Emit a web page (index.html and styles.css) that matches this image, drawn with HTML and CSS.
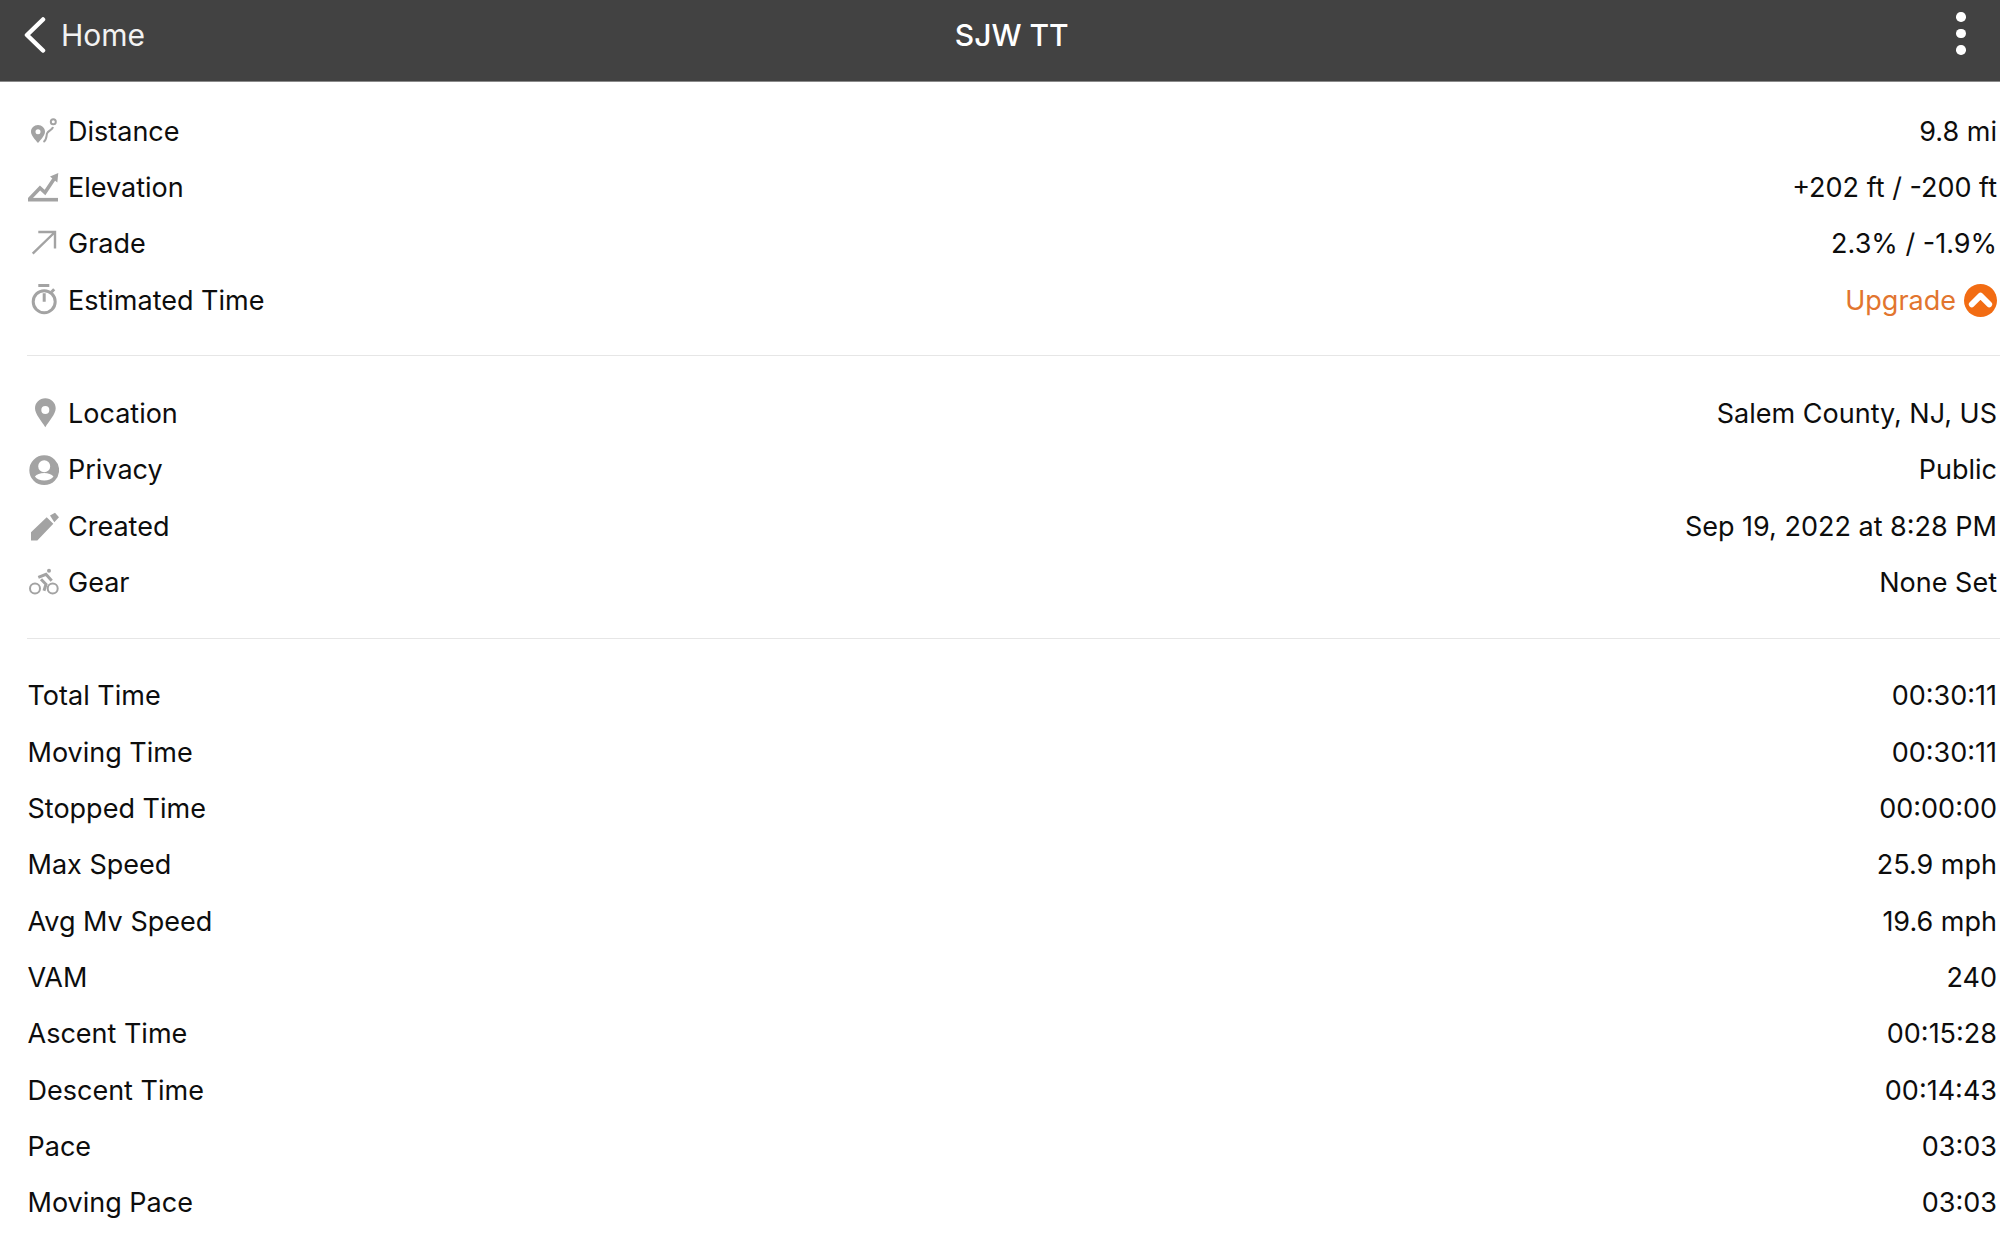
FILE: index.html
```html
<!DOCTYPE html>
<html lang="en">
<head>
<meta charset="utf-8">
<title>SJW TT</title>
<link rel="stylesheet" href="styles.css">
</head>
<body>
<header class="topbar">
  <div class="back">
    <svg class="back-icon" viewBox="0 0 22 36"><path d="M19 2.500 3 18l16 15.500" /></svg>
    <span>Home</span>
  </div>
  <div class="title">SJW TT</div>
  <div class="more"><i></i><i></i><i></i></div>
</header>
<main class="content">
  <section class="group">
    <div class="row">
      <div class="label">
        <svg class="icon" viewBox="0 0 32 32"><path class="fill" fill-rule="evenodd" d="M11 10C7.100 10 4 13 4 16.700 4 20.500 8.200 24.400 11 28c2.800-3.600 7-7.500 7-11.300C18 13 14.900 10 11 10Zm0 4.200a2.500 2.500 0 1 1 0 5 2.500 2.500 0 0 1 0-5Z"/><circle class="line thin" cx="26.300" cy="6.700" r="2.500"/><path class="line thin" d="M26 12c-.5 3-5 3.500-6 6.500-.8 2.800 0 6.500-3.500 8.500"/></svg>
        <span>Distance</span>
      </div>
      <div class="value">9.8 mi</div>
    </div>
    <div class="row">
      <div class="label">
        <svg class="icon" viewBox="0 0 32 32"><path class="line thick" d="M1 28.700h30" /><path class="line thick" d="M2.500 28 13 17l5 4.500L27 8"/><path class="fill" d="M23 5.400 31.300 2l-1 9.400z"/></svg>
        <span>Elevation</span>
      </div>
      <div class="value">+202 ft / -200 ft</div>
    </div>
    <div class="row">
      <div class="label">
        <svg class="icon" viewBox="0 0 32 32"><path class="line thin2" d="M5.700 25.600 28 4M11.300 4H28v16.600"/></svg>
        <span>Grade</span>
      </div>
      <div class="value">2.3% / -1.9%</div>
    </div>
    <div class="row">
      <div class="label">
        <svg class="icon" viewBox="0 0 32 32"><circle class="line" cx="17.200" cy="17.700" r="11"/><path class="line" d="M11.300 1.500h11M17.200 9.300v8.500M24.500 8l2.700-2.700"/></svg>
        <span>Estimated Time</span>
      </div>
      <div class="value upgrade">
        <span>Upgrade</span>
        <svg class="upgrade-icon" viewBox="0 0 34 34"><circle cx="17" cy="17" r="17"/><path d="M8 21l9-9 9 9"/></svg>
      </div>
    </div>
  </section>
  <section class="group">
    <div class="row">
      <div class="label">
        <svg class="icon" viewBox="0 0 32 32"><path class="fill" fill-rule="evenodd" d="M18.300 1.300C12.500 1.300 8 5.800 8 11.300c0 6 6.500 12.500 10.300 19 3.800-6.500 10.400-13 10.400-19 0-5.500-4.600-10-10.400-10Zm0 7.700a4 4 0 1 1 0 8 4 4 0 0 1 0-8Z"/></svg>
        <span>Location</span>
      </div>
      <div class="value">Salem County, NJ, US</div>
    </div>
    <div class="row">
      <div class="label">
        <svg class="icon" viewBox="0 0 32 32"><path class="fill" fill-rule="evenodd" d="M17.200 1.300a14.900 14.900 0 1 1 0 29.800 14.900 14.900 0 0 1 0-29.800Zm0 5a6 6 0 1 0 0 12 6 6 0 0 0 0-12Zm0 12.700c-4 0-7.500 1.300-9.300 3.500 1.800 2.500 5.300 4 9.300 4s7.500-1.500 9.300-4c-1.800-2.200-5.300-3.500-9.300-3.500Z"/></svg>
        <span>Privacy</span>
      </div>
      <div class="value">Public</div>
    </div>
    <div class="row">
      <div class="label">
        <svg class="icon" viewBox="0 0 32 32"><path class="fill" d="M4 22.200 19.700 7.200l6.600 6.600-16 16.700H4ZM23 5.500l5-2.700 4 4.400-4.700 5Z"/></svg>
        <span>Created</span>
      </div>
      <div class="value">Sep 19, 2022 at 8:28 PM</div>
    </div>
    <div class="row">
      <div class="label">
        <svg class="icon" viewBox="0 0 32 32"><circle class="line thin" cx="8" cy="22.500" r="5"/><circle class="line thin" cx="25.700" cy="22.500" r="5"/><circle class="fill" cx="22" cy="4.700" r="2"/><path class="line" d="M11.300 11.300l7.700-3 5.700 6.400M14 13.300l5 5-2 6.400"/></svg>
        <span>Gear</span>
      </div>
      <div class="value">None Set</div>
    </div>
  </section>
  <section class="group last">
    <div class="row"><div class="label">Total Time</div><div class="value">00:30:11</div></div>
    <div class="row"><div class="label">Moving Time</div><div class="value">00:30:11</div></div>
    <div class="row"><div class="label">Stopped Time</div><div class="value">00:00:00</div></div>
    <div class="row"><div class="label">Max Speed</div><div class="value">25.9 mph</div></div>
    <div class="row"><div class="label">Avg Mv Speed</div><div class="value">19.6 mph</div></div>
    <div class="row"><div class="label">VAM</div><div class="value">240</div></div>
    <div class="row"><div class="label">Ascent Time</div><div class="value">00:15:28</div></div>
    <div class="row"><div class="label">Descent Time</div><div class="value">00:14:43</div></div>
    <div class="row"><div class="label">Pace</div><div class="value">03:03</div></div>
    <div class="row"><div class="label">Moving Pace</div><div class="value">03:03</div></div>
  </section>
</main>
</body>
</html>
```
FILE: styles.css
```css
* { box-sizing: border-box; }
html, body { margin: 0; height: 1248px; overflow: hidden; background: #fff; }
body { font-family: Inter, "Liberation Sans", sans-serif; color: #0d0d0d; font-size: 27px; }
.topbar {
  height: 82px;
  background: #424242;
  border-bottom: 1px solid #8a8a8a;
  color: #fff;
  display: grid;
  grid-template-columns: 1fr auto 1fr;
  align-items: start;
  padding: 15px 34.500px 0 24px;
}
.back { display: flex; align-items: center; gap: 15px; height: 40px; font-size: 30px; color: #f2f2f2; }
.back-icon { width: 22px; height: 36px; flex: none; fill: none; stroke: #fff; stroke-width: 4.500; stroke-linecap: round; stroke-linejoin: round; }
.title { font-size: 30px; font-weight: 500; height: 40px; line-height: 40px; margin-left: 34px; }
.more { justify-self: end; display: flex; flex-direction: column; gap: 7px; margin-top: -3px; }
.more i { display: block; width: 9.500px; height: 9.500px; border-radius: 50%; background: #fff; }
.content { display: block; }
.group { margin-left: 27px; padding: 21px 3px 27px 0; border-bottom: 1px solid #e6e6e6; }
.group + .group { padding-top: 29px; }
.group.last { border-bottom: 0; }
.group.last .label { padding-left: 0.500px; }
.row { height: 56.330px; display: flex; align-items: center; justify-content: space-between; }
.label { display: flex; align-items: center; gap: 9px; }
.value { display: flex; align-items: center; gap: 8px; }
.upgrade { color: #e2752e; }
.icon { width: 32px; height: 32px; flex: none; }
.fill { fill: #a3a3a3; }
.line { fill: none; stroke: #a3a3a3; stroke-width: 3; }
.thin { stroke-width: 2; }
.thin2 { stroke-width: 2.400; }
.thick { stroke-width: 3.600; }
.upgrade-icon { width: 33px; height: 33px; }
.upgrade-icon circle { fill: #f26c13; }
.upgrade-icon path { fill: none; stroke: #fff; stroke-width: 6; stroke-linecap: round; stroke-linejoin: round; }
```
